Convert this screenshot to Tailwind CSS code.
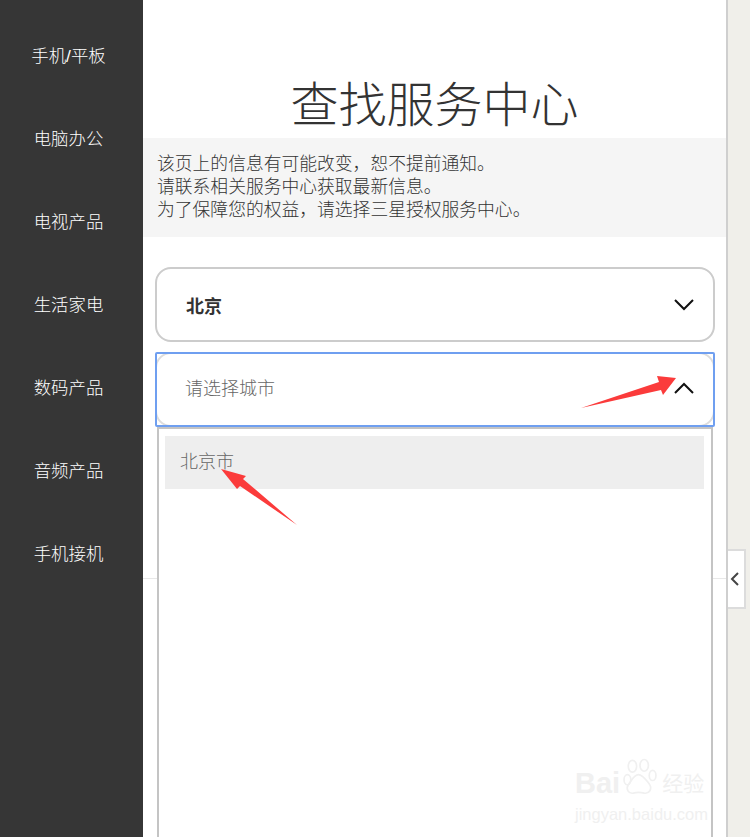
<!DOCTYPE html>
<html lang="zh-CN">
  <head>
    <meta charset="UTF-8" />
    <title>查找服务中心</title>
    <script src="https://cdn.jsdelivr.net/npm/@tailwindcss/browser@4"></script>
  </head>
  <body class="bg-[#f0efea] font-['Liberation_Sans','Noto_Sans_CJK_SC',sans-serif]">
    <div class="relative flex h-[837px] w-[750px] overflow-hidden">
      <!-- left menu -->
      <nav class="w-[143px] shrink-0 bg-[#363636] pt-[15px] pr-[6px] text-white text-[17.4px] font-light">
        <div class="flex h-[83px] items-center justify-center">手机/平板</div>
        <div class="flex h-[83px] items-center justify-center">电脑办公</div>
        <div class="flex h-[83px] items-center justify-center">电视产品</div>
        <div class="flex h-[83px] items-center justify-center">生活家电</div>
        <div class="flex h-[83px] items-center justify-center">数码产品</div>
        <div class="flex h-[83px] items-center justify-center">音频产品</div>
        <div class="flex h-[83px] items-center justify-center">手机接机</div>
      </nav>

      <main class="relative w-[585px] shrink-0 border-r-2 border-[#cfcfcf] bg-white">
        <h1 class="flex h-[138px] items-end justify-center text-[48px] leading-[64px] font-light text-[#333]">查找服务中心</h1>

        <div class="h-[99px] bg-[#f5f5f5] pl-[14px] pt-[15px] text-[17.8px] leading-[23px] font-light text-[#333]">
          <p>该页上的信息有可能改变，恕不提前通知。</p>
          <p>请联系相关服务中心获取最新信息。</p>
          <p>为了保障您的权益，请选择三星授权服务中心。</p>
        </div>

        <div class="absolute top-[578px] left-0 h-[1px] w-full bg-[#e8e8e8]"></div>

        <div class="relative mt-[30px] ml-[12px] w-[560px]">
          <div class="flex h-[75px] items-center justify-between rounded-[16px] border-2 border-[#cccccc] bg-white pr-[19px] pl-[29px]">
            <span class="pt-[5px] text-[18px] font-bold text-[#333]">北京</span>
            <svg class="h-[12px] w-[20px]" viewBox="0 0 20 12" fill="none" stroke="#111" stroke-width="2"><path d="M1 1l9 9 9-9" /></svg>
          </div>

          <div class="mt-[10px] rounded-[2px] outline-2 -outline-offset-2 outline-[#6f9ff0]">
            <div class="flex h-[75px] items-center justify-between rounded-[16px] border-2 border-[#dddddd] bg-white pr-[19px] pl-[28px]">
              <span class="text-[18px] font-light text-[#666]">请选择城市</span>
              <svg class="h-[12px] w-[20px] -mt-[3px]" viewBox="0 0 20 12" fill="none" stroke="#111" stroke-width="2"><path d="M1 11l9-9 9 9" /></svg>
            </div>
          </div>

          <div class="mx-[2px] h-[420px] border-x-2 border-t-2 border-[#c4c4c4] bg-white pt-[7px] pr-[7px] pl-[6px]">
            <div class="flex h-[53px] items-center bg-[#eeeeee] pl-[15px] text-[18px] font-light text-[#666]">北京市</div>
          </div>
        </div>

        <!-- watermark -->
        <div class="absolute top-[757px] left-[432px] w-[140px] text-[#f0f0f0]">
          <div class="flex h-[42px] items-end">
            <span class="text-[29px] leading-[32px] font-bold">Bai</span>
            <svg class="h-[42px] w-[40px]" viewBox="0 0 40 50" fill="none" stroke="#f0f0f0" stroke-width="2">
              <ellipse cx="11" cy="11" rx="5" ry="7" />
              <ellipse cx="25" cy="10" rx="5" ry="7" />
              <ellipse cx="35" cy="22" rx="4" ry="6" />
              <ellipse cx="5" cy="27" rx="4" ry="6" />
              <path d="M18 21c5 0 9 6 13 11 4 6 0 12-6 11-4-1-9-1-13 0-6 1-9-5-6-10 4-5 7-12 12-12z" />
            </svg>
            <span class="ml-[2px] text-[21px] leading-[30px]">经验</span>
          </div>
          <div class="mt-[6px] text-[16.5px] leading-[18px]">jingyan.baidu.com</div>
        </div>
      </main>

      <!-- collapse tab -->
      <div class="absolute top-[549px] left-[728px] flex h-[60px] w-[18px] items-center justify-center border-y-2 border-r-2 border-[#dcdcdc] bg-white">
        <svg class="h-[14px] w-[9px] -ml-[4px]" viewBox="0 0 9 14" fill="none" stroke="#444" stroke-width="2"><path d="M8 1L2 7l6 6" /></svg>
      </div>

      <!-- red annotation arrows -->
      <svg class="absolute top-0 left-0 h-[837px] w-[750px]" viewBox="0 0 750 837" fill="#fb3b3b">
        <path d="M581 408l78-26-2-6 19 2-13 17-2-5z" />
        <path d="M297 525l-57-39-3 3-16-20 25 7-3 3z" />
      </svg>
    </div>
  </body>
</html>
